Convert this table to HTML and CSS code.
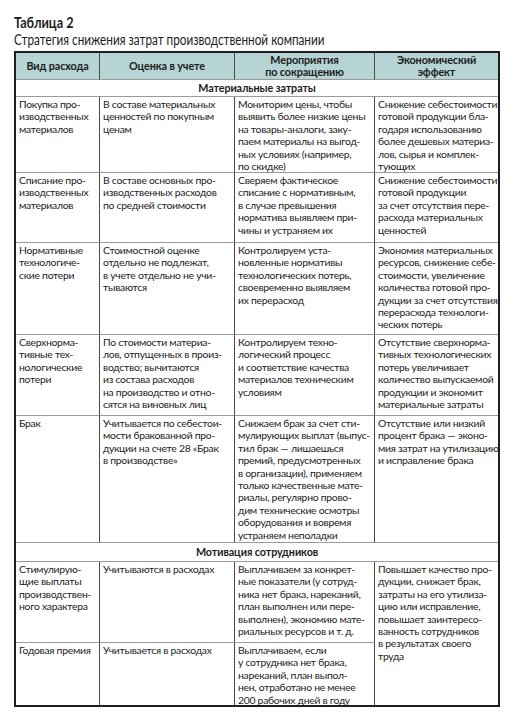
FILE: index.html
```html
<!DOCTYPE html>
<html lang="ru">
<head>
<meta charset="utf-8">
<title>Таблица 2</title>
<link rel="stylesheet" href="styles.css">
</head>
<body>
<div class="page">
  <h1 class="title">Таблица 2</h1>
  <p class="subtitle">Стратегия снижения затрат производственной компании</p>
  <div class="table">
    <div class="cell head">Вид расхода</div>
    <div class="cell head">Оценка в учете</div>
    <div class="cell head">Мероприятия<br>по сокращению</div>
    <div class="cell head last">Экономический<br>эффект</div>

    <div class="cell section">Материальные затраты</div>

    <div class="cell">Покупка про-<br>изводственных<br>материалов</div>
    <div class="cell">В составе материальных<br>ценностей по покупным<br>ценам</div>
    <div class="cell">Мониторим цены, чтобы<br>выявить более низкие цены<br>на товары-аналоги, заку-<br>паем материалы на выгод-<br>ных условиях (например,<br>по скидке)</div>
    <div class="cell last">Снижение себестоимости<br>готовой продукции бла-<br>годаря использованию<br>более дешевых материа-<br>лов, сырья и комплек-<br>тующих</div>

    <div class="cell">Списание про-<br>изводственных<br>материалов</div>
    <div class="cell">В составе основных про-<br>изводственных расходов<br>по средней стоимости</div>
    <div class="cell">Сверяем фактическое<br>списание с нормативным,<br>в случае превышения<br>норматива выявляем при-<br>чины и устраняем их</div>
    <div class="cell last">Снижение себестоимости<br>готовой продукции<br>за счет отсутствия пере-<br>расхода материальных<br>ценностей</div>

    <div class="cell">Нормативные<br>технологиче-<br>ские потери</div>
    <div class="cell">Стоимостной оценке<br>отдельно не подлежат,<br>в учете отдельно не учи-<br>тываются</div>
    <div class="cell">Контролируем уста-<br>новленные нормативы<br>технологических потерь,<br>своевременно выявляем<br>их перерасход</div>
    <div class="cell last">Экономия материальных<br>ресурсов, снижение себе-<br>стоимости, увеличение<br>количества готовой про-<br>дукции за счет отсутствия<br>перерасхода технологи-<br>ческих потерь</div>

    <div class="cell">Сверхнорма-<br>тивные тех-<br>нологические<br>потери</div>
    <div class="cell">По стоимости материа-<br>лов, отпущенных в произ-<br>водство; вычитаются<br>из состава расходов<br>на производство и отно-<br>сятся на виновных лиц</div>
    <div class="cell">Контролируем техно-<br>логический процесс<br>и соответствие качества<br>материалов техническим<br>условиям</div>
    <div class="cell last">Отсутствие сверхнорма-<br>тивных технологических<br>потерь увеличивает<br>количество выпускаемой<br>продукции и экономит<br>материальные затраты</div>

    <div class="cell">Брак</div>
    <div class="cell">Учитывается по себестои-<br>мости бракованной про-<br>дукции на счете 28 «Брак<br>в производстве»</div>
    <div class="cell">Снижаем брак за счет сти-<br>мулирующих выплат (выпус-<br>тил брак — лишаешься<br>премий, предусмотренных<br>в организации), применяем<br>только качественные мате-<br>риалы, регулярно прово-<br>дим технические осмотры<br>оборудования и вовремя<br>устраняем неполадки</div>
    <div class="cell last">Отсутствие или низкий<br>процент брака — эконо-<br>мия затрат на утилизацию<br>и исправление брака</div>

    <div class="cell section">Мотивация сотрудников</div>

    <div class="cell">Стимулирую-<br>щие выплаты<br>производствен-<br>ного характера</div>
    <div class="cell">Учитываются в расходах</div>
    <div class="cell">Выплачиваем за конкрет-<br>ные показатели (у сотруд-<br>ника нет брака, нареканий,<br>план выполнен или пере-<br>выполнен), экономию мате-<br>риальных ресурсов и т. д.</div>
    <div class="cell last span2 bottom">Повышает качество про-<br>дукции, снижает брак,<br>затраты на его утилиза-<br>цию или исправление,<br>повышает заинтересо-<br>ванность сотрудников<br>в результатах своего<br>труда</div>

    <div class="cell bottom">Годовая премия</div>
    <div class="cell bottom">Учитывается в расходах</div>
    <div class="cell bottom">Выплачиваем, если<br>у сотрудника нет брака,<br>нареканий, план выпол-<br>нен, отработано не менее<br>200 рабочих дней в году</div>
  </div>
</div>
</body>
</html>
```

FILE: styles.css
```css
* {
  box-sizing: border-box;
}

body {
  margin: 0;
  background: #ffffff;
  color: #1c1c1c;
  font-family: Lato, "Noto Sans", sans-serif;
}

.page {
  padding: 13px 0 0 14px;
}

.title {
  margin: 0;
  font-weight: 700;
  font-size: 16px;
  line-height: 18px;
  transform: scaleX(0.79);
  transform-origin: left center;
  white-space: nowrap;
}

.subtitle {
  margin: 0 0 2px;
  font-size: 14.5px;
  line-height: 18px;
  transform: scaleX(0.81);
  transform-origin: left center;
  white-space: nowrap;
}

.table {
  display: grid;
  width: 486px;
  border: 2px solid #1e1e1e;
  grid-template-columns: 84px 135px 140px 123px;
  grid-template-rows: 27px 17px 76px 70px 92px 81px 127px 19px 81px 62px;
  font-size: 10.4px;
  letter-spacing: -0.28px;
  line-height: 12.4px;
}

.cell {
  border-right: 1px solid #4a4a4a;
  border-bottom: 1px solid #9a9a9a;
  padding: 1px 2px 0 3px;
  white-space: nowrap;
  overflow: hidden;
}

.cell.last {
  border-right: none;
}

.head {
  background: #b5d4d3;
  font-weight: 700;
  font-size: 10.8px;
  letter-spacing: -0.1px;
  line-height: 12px;
  text-align: center;
  display: flex;
  align-items: center;
  justify-content: center;
  padding: 0 2px;
}

.section {
  grid-column: 1 / -1;
  border-right: none;
  font-weight: 700;
  font-size: 10.8px;
  letter-spacing: -0.1px;
  display: flex;
  align-items: center;
  justify-content: center;
  padding: 0;
}

.span2 {
  grid-row: span 2;
}

.bottom {
  border-bottom: none;
}
```
